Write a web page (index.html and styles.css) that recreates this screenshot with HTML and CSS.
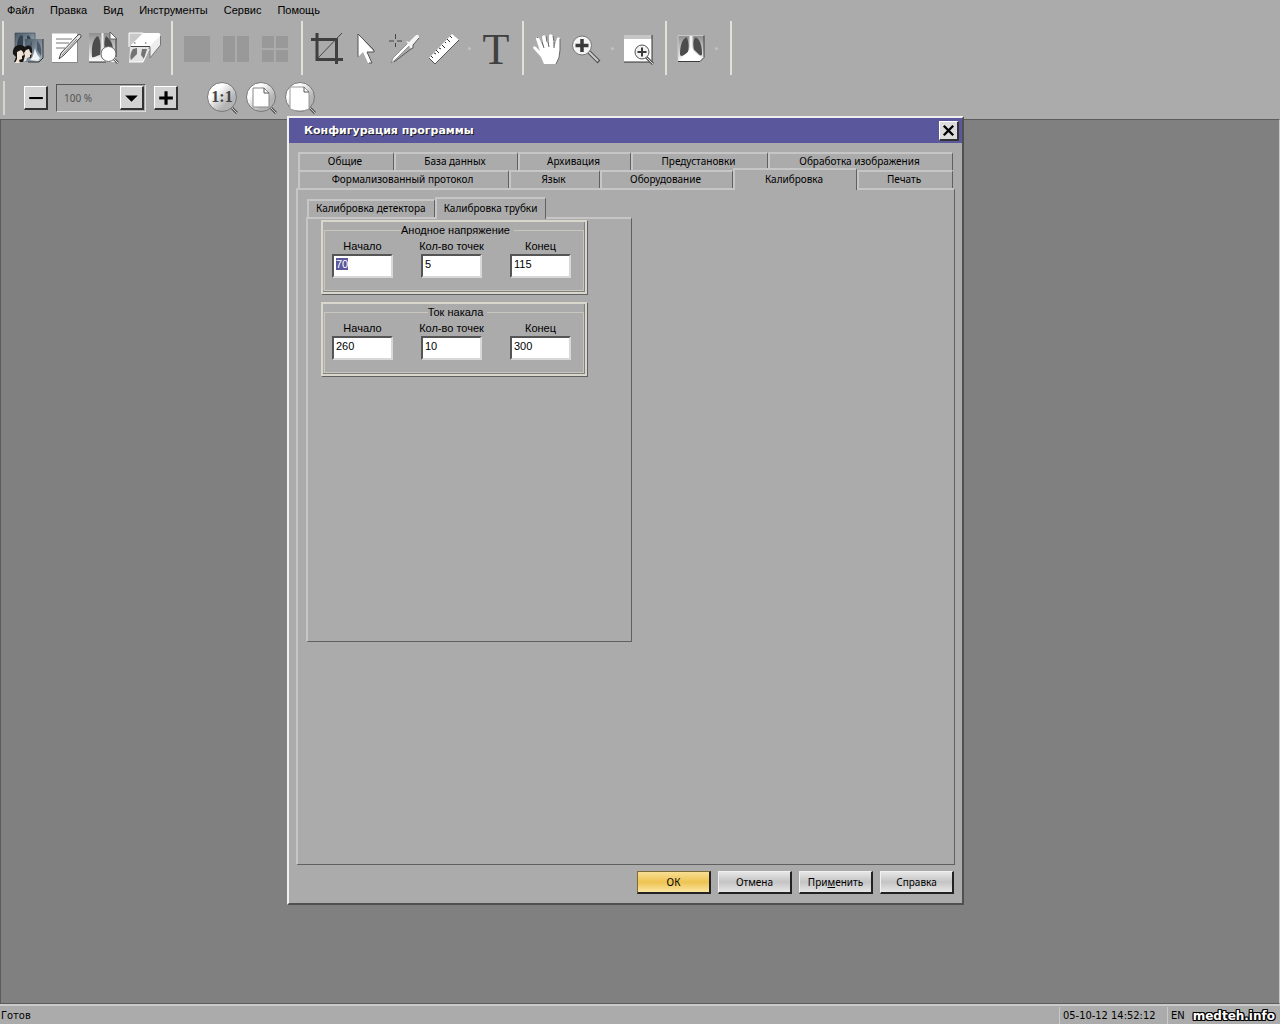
FILE: index.html
```html
<!DOCTYPE html>
<html lang="ru">
<head>
<meta charset="utf-8">
<title>Конфигурация программы</title>
<link rel="stylesheet" href="styles.css">
</head>
<body>
<svg class="defs" width="0" height="0" aria-hidden="true">
  <defs>
    <linearGradient id="film" x1="0" y1="0" x2="0" y2="1"><stop offset="0" stop-color="#8f8f8f"/><stop offset=".5" stop-color="#c4c4c4"/><stop offset="1" stop-color="#fff"/></linearGradient>
    <linearGradient id="navy" x1="0" y1="0" x2="1" y2="1"><stop offset="0" stop-color="#4a5866"/><stop offset="1" stop-color="#a9b8c4"/></linearGradient>
    <linearGradient id="lens" x1="0" y1="0" x2="1" y2="1"><stop offset=".3" stop-color="#fff"/><stop offset=".7" stop-color="#b4b4b4"/></linearGradient>
    <symbol id="lungs" viewBox="0 0 28 28">
      <path d="M1 1H27V23L23 27H1Z" fill="url(#film)"/>
      <path d="M10 3C6 3 3 10 3 19C3 21 4 22 6 21L11 18C12 13 12 8 10 3Z" fill="#4c4c4c"/>
      <path d="M18 3C22 3 25 10 25 19C25 21 24 22 22 20L17 15C16 10 16 6 18 3Z" fill="#4c4c4c"/>
      <path d="M14 1V16" stroke="#f4f4f4" stroke-width="3"/>
      <path d="M3 26C6 20 11 20 13 13H15C17 19 22 20 24 23L23 26Z" fill="#fff"/>
      <path d="M1 27V1H27" fill="none" stroke="#c9c9c9"/>
      <path d="M1 27H23L27 23V1" fill="none" stroke="#3c3c3c"/>
    </symbol>
  </defs>
</svg>

<nav class="menubar">
  <button>Файл</button><button>Правка</button><button>Вид</button><button>Инструменты</button><button>Сервис</button><button>Помощь</button>
</nav>

<div class="toolbar">
  <div class="group">
    <button class="tool" aria-label="Пациенты"><svg viewBox="0 0 32 32">
      <path d="M3 1H23V18H3Z" fill="url(#navy)" stroke="#35414d" stroke-width=".6"/>
      <path d="M9 3C6 5 5 10 5 15H11V4ZM16 3C19 5 20 10 21 15H15V4Z" fill="#34424f"/>
      <path d="M13 7H31V26L27 30H13Z" fill="url(#navy)"/><path d="M31 7V26L27 30H16" fill="none" stroke="#333"/>
      <path d="M20 9C17 11 15 17 16 24L20 20ZM25 9C29 12 30 18 29 24L25 18Z" fill="#4b5a68"/><path d="M18 28C21 26 22 20 23 16C24 21 26 24 28 26L26 29Z" fill="#eef3f6"/>
      <path d="M1 22C0 13 8 11 13 15C18 11 21 16 20 21L19 26L13 24L11 30H2L4 25Z" fill="#161616"/>
      <path d="M5 20L9 18L11 20L12 23L10 24L10 27L7 28L8 31H3L5 27Z" fill="#f2e2d6"/>
      <path d="M14 18L17 17L18 20L20 22L18 23V25L15 26L14 29H12L13 24L12 21Z" fill="#f2e2d6"/>
    </svg></button>
    <button class="tool" aria-label="Протокол"><svg viewBox="0 0 32 32">
      <path d="M1 1.500H26V30H1Z" fill="#fff"/><path d="M26.500 8V30.500H1" fill="none" stroke="#888"/>
      <path d="M5 7H21M5 11H18M5 16H14" stroke="#777"/>
      <path d="M8 27L10 21L27 3Q30 1 30 5L13 23Z" fill="#e4e4e4" stroke="#444"/><path d="M11 23L26 7" stroke="#888"/>
    </svg></button>
    <button class="tool" aria-label="Просмотр снимка"><svg viewBox="0 0 32 32">
      <path d="M-1 1H20L26 7V30H-1Z" fill="url(#film)"/><path d="M26 7V25M-1 30H16" stroke="#333"/>
      <path d="M8 4C3 6 1 15 2 25C5 26 8 23 10 23C11 16 11 9 8 4Z" fill="#4c4c4c"/><path d="M16 4C20 7 23 11 23 19H15C14 13 14 8 16 4Z" fill="#4c4c4c"/>
      <path d="M12.500 1V22" stroke="#eee" stroke-width="2"/>
      <path d="M20 0V7H27Z" fill="#fff" stroke="#444" stroke-width=".8"/>
      <circle cx="18.500" cy="22" r="7.500" fill="#fff" stroke="#666"/><path d="M24 27L28 31" stroke="#555" stroke-width="2.500"/><path d="M24 27L28 31" stroke="#eee"/>
    </svg></button>
    <button class="tool" aria-label="Печать"><svg viewBox="0 0 32 32">
      <path d="M0 1H15L3 14H0Z" fill="#c8c8c8"/><path d="M0 15V1H14" fill="none" stroke="#fff"/>
      <path d="M2 13L14 1H30Q32 2 31 5V13L21 26V15H2Z" fill="#fff"/>
      <path d="M21 14L31 4V13L21 26Z" fill="#ededed"/><path d="M31.500 4V13L21 26V15" fill="none" stroke="#777"/>
      <path d="M1 15H20L14 30H0Z" fill="#e4e4e4"/><path d="M4 17C1 21 1 26 2 28L8 22V16ZM13 17L12 23L15 27L18 17Z" fill="#737373"/>
      <path d="M2 14.500H21" stroke="#444"/><path d="M5 11H6.500M16 11H17.500" stroke="#555"/><path d="M0 30H14L20 17" fill="none" stroke="#fff"/>
    </svg></button>
  </div>
  <div class="group">
    <button class="tool" aria-label="Одно окно" disabled><svg viewBox="0 0 32 32"><path d="M3 4H29V30H3Z" fill="#999"/></svg></button>
    <button class="tool" aria-label="Два окна" disabled><svg viewBox="0 0 32 32"><path d="M3 4H15V30H3ZM17 4H29V30H17Z" fill="#999"/></svg></button>
    <button class="tool" aria-label="Четыре окна" disabled><svg viewBox="0 0 32 32"><path d="M3 4H15V16H3ZM17 4H29V16H17ZM3 18H15V30H3ZM17 18H29V30H17Z" fill="#999"/></svg></button>
  </div>
  <div class="group">
    <button class="tool" aria-label="Обрезка"><svg viewBox="0 0 32 32"><path d="M6 1V27.500H32M0 7.500H25.500V32" fill="none" stroke="#3f3f3f" stroke-width="3"/><path d="M7 26L31 1" stroke="#444"/></svg></button>
    <button class="tool" aria-label="Указатель"><svg viewBox="0 0 32 32"><path d="M8 2V25L13 20L18 31H22L17 20H24Z" fill="#fff"/><path d="M8 2L24 18V20H17L22 31H19M8 2V25" fill="none" stroke="#555"/></svg></button>
    <button class="tool" aria-label="Пипетка"><svg viewBox="0 0 32 32"><path d="M0 9H5M8 9H13M6.500 2V7M6.500 11V15" stroke="#444"/><path d="M2 31L4 26L19 11L21 13L6 28Z" fill="#fff" stroke="#777" stroke-width=".7"/><path d="M17 9L20 10L26 4Q30 1 30 5Q30 7 24 13L24 16L22 17Z" fill="#f4f4f4"/><path d="M30 6L24 13V16L22 17L5 30" fill="none" stroke="#555"/></svg></button>
    <button class="tool" aria-label="Линейка"><svg viewBox="0 0 32 32"><path d="M1 26L24 2L31 8L7 32Z" fill="#fff"/><path d="M31 8L7 32L1 26" fill="none" stroke="#555"/><path d="M3 24L5 26M6 21L8 22M8 18L11 21M11 16L13 17M14 13L17 16M17 10L18 11M19 7L22 10M22 4L24 6" stroke="#333"/></svg></button>
    <span class="more"></span>
    <button class="tool" aria-label="Текст"><svg viewBox="0 0 32 32"><text x="16" y="32" class="glyph-t">T</text></svg></button>
  </div>
  <div class="group">
    <button class="tool" aria-label="Рука"><svg viewBox="0 0 32 32"><path d="M12 32L9 25L1 16Q1 13 4 15L8 19L4 7Q4 4 7 6L12 16L10 5Q11 2 14 4L17 15L17 3Q19 1 21 4L22 16L25 6Q28 4 28 8L28 18Q28 26 24 32Z" fill="#fff"/><path d="M10 10L12 16M16 10L17 15M22 10V16M28 7V18Q28 26 24 32M14 4L15 10M21 4L22 9M5 5L6 6" fill="none" stroke="#666"/></svg></button>
    <button class="tool" aria-label="Увеличить"><svg viewBox="0 0 32 32"><path d="M18 20L28 30" stroke="#555" stroke-width="4"/><path d="M18 20L27 29" stroke="#ccc" stroke-width="2"/><circle cx="11" cy="13.500" r="9.500" fill="#f4f4f4" stroke="#777"/><path d="M11 7V20M4.500 13.500H17.500" stroke="#3a3a3a" stroke-width="3.500"/></svg></button>
    <span class="more"></span>
    <button class="tool" aria-label="Увеличить область"><svg viewBox="0 0 32 32"><path d="M1 3H29V30H1Z" fill="#fff"/><path d="M1 3H29V7H1Z" fill="#c6c6c6"/><path d="M29 3V30H1" fill="none" stroke="#333"/><path d="M23 25L30 32" stroke="#555" stroke-width="3"/><path d="M23 25L30 32" stroke="#ddd"/><circle cx="19" cy="20" r="7" fill="#f2f2f2" stroke="#555"/><path d="M19 15.500V24.500M14.500 20H23.500" stroke="#3a3a3a" stroke-width="2"/></svg></button>
  </div>
  <div class="group">
    <button class="tool" aria-label="Снимок"><svg viewBox="0 0 32 32"><use href="#lungs" x="2" y="2" width="28" height="29"/></svg></button>
    <span class="more"></span>
  </div>
  <div class="group"></div>
</div>

<div class="zoombar">
  <button class="square" aria-label="Уменьшить масштаб"><svg viewBox="0 0 20 20"><path d="M4 10.500H17" stroke="#000" stroke-width="2"/></svg></button>
  <div class="combo">
    <select aria-label="Масштаб"><option>100 %</option></select>
    <span class="arrow"><svg viewBox="0 0 20 20"><path d="M4 8H16L10 14Z"/></svg></span>
  </div>
  <button class="square" aria-label="Увеличить масштаб"><svg viewBox="0 0 20 20"><path d="M4 10.500H17M10.500 4V17" stroke="#000" stroke-width="3"/></svg></button>
  <div class="lenses">
    <button class="lens" aria-label="Масштаб 1:1"><svg viewBox="0 0 32 32"><path d="M26 26L31 31" stroke="#555" stroke-width="3"/><path d="M26 26L31 31" stroke="#ccc"/><circle cx="16" cy="15" r="14.500" fill="url(#lens)" stroke="#777"/><text x="16" y="20" class="glyph-one">1:1</text></svg></button>
    <button class="lens" aria-label="Страница целиком"><svg viewBox="0 0 32 32"><path d="M26 26L31 31" stroke="#555" stroke-width="3"/><path d="M26 26L31 31" stroke="#ccc"/><circle cx="16" cy="15" r="14.500" fill="url(#lens)" stroke="#777"/><path d="M8 6H19L24 11V25H8Z" fill="#fff" stroke="#888"/><path d="M19 6V11H24" fill="none" stroke="#555"/></svg></button>
    <button class="lens" aria-label="По ширине страницы"><svg viewBox="0 0 32 32"><path d="M26 26L31 31" stroke="#555" stroke-width="3"/><path d="M26 26L31 31" stroke="#ccc"/><circle cx="16" cy="15" r="14.500" fill="url(#lens)" stroke="#777"/><path d="M6 5H20L25 10V27Q16 31 6 27Z" fill="#fff" stroke="#999"/><path d="M20 5V10H25" fill="none" stroke="#555"/></svg></button>
  </div>
</div>

<main class="workspace"></main>

<footer class="statusbar">
  <span class="cell ready">Готов</span>
  <span class="cell clock">05-10-12 14:52:12</span>
  <span class="cell lang">EN<b class="watermark">medteh.info</b></span>
</footer>

<section class="dialog" role="dialog" aria-labelledby="dialog-title">
  <header class="titlebar">
    <h1 id="dialog-title">Конфигурация программы</h1>
    <button class="close" aria-label="Закрыть"><svg viewBox="0 0 18 18"><path d="M4 4L14 14M14 4L4 14" stroke="#000" stroke-width="2.500"/></svg></button>
  </header>
  <div class="dialog-body">
    <div class="tabs" role="tablist">
      <div class="tab-row first">
        <button class="tab" role="tab">Общие</button><button class="tab" role="tab">База данных</button><button class="tab" role="tab">Архивация</button><button class="tab" role="tab">Предустановки</button><button class="tab" role="tab">Обработка изображения</button>
      </div>
      <div class="tab-row second">
        <button class="tab" role="tab">Формализованный протокол</button><button class="tab" role="tab">Язык</button><button class="tab" role="tab">Оборудование</button><button class="tab active" role="tab" aria-selected="true">Калибровка</button><button class="tab" role="tab">Печать</button>
      </div>
    </div>
    <div class="page">
      <div class="inner-tabs" role="tablist">
        <button class="tab" role="tab">Калибровка детектора</button><button class="tab active" role="tab" aria-selected="true">Калибровка трубки</button>
      </div>
      <div class="inner-page">
        <div class="frame"><fieldset>
          <legend>Анодное напряжение</legend>
          <div class="fields">
            <label>Начало<input type="text" id="voltage-start" value="70"></label>
            <label>Кол-во точек<input type="text" value="5"></label>
            <label>Конец<input type="text" value="115"></label>
          </div>
        </fieldset></div>
        <div class="frame"><fieldset>
          <legend>Ток накала</legend>
          <div class="fields">
            <label>Начало<input type="text" value="260"></label>
            <label>Кол-во точек<input type="text" value="10"></label>
            <label>Конец<input type="text" value="300"></label>
          </div>
        </fieldset></div>
      </div>
    </div>
    <div class="actions">
      <button class="action primary">ОК</button>
      <button class="action">Отмена</button>
      <button class="action">При<u>м</u>енить</button>
      <button class="action">Справка</button>
    </div>
  </div>
</section>
<script src="script.js"></script>
</body>
</html>
```

FILE: styles.css
```css
* { box-sizing: border-box; }

body {
  margin: 0;
  min-height: 100vh;
  display: flex;
  flex-direction: column;
  position: relative;
  background: #ababab;
  color: #000;
  font: 11px/14px "Liberation Sans", sans-serif;
}

button, input, select { font: inherit; color: inherit; margin: 0; border-radius: 0; }
button { padding: 0; border: 0; background: none; }
svg { display: block; }
.defs { position: absolute; }

/* Menu */
.menubar { display: flex; gap: 16px; height: 20px; padding: 0 7px; }

/* Main toolbar */
.toolbar { display: flex; padding: 1px 2px; height: 59px; }
.group {
  display: flex;
  align-items: center;
  height: 54px;
  padding: 0 7px 0 4px;
  border-left: 2px solid #e3e0d6;
}
.tool { width: 39px; display: flex; justify-content: center; }
.tool svg { width: 32px; height: 32px; overflow: visible; }
.more { width: 13px; display: flex; justify-content: center; }
.more::before { content: ""; width: 3px; height: 3px; border-radius: 2px; background: #c2c2c2; }
.glyph-t { font: 44px "Liberation Serif", serif; text-anchor: middle; fill: #404040; }
.glyph-one { font: bold 16px "Liberation Serif", serif; text-anchor: middle; fill: #444; }

/* Zoom toolbar */
.zoombar {
  display: flex;
  align-items: center;
  gap: 8px;
  height: 34px;
  margin: 2px 0 4px 3px;
  padding-left: 19px;
  border-left: 2px solid #d6d4cc;
}
.square, .arrow {
  width: 24px;
  height: 24px;
  background: #d2d2d2;
  border: 1px solid #fff;
  border-right: 2px solid #333;
  border-bottom: 2px solid #333;
}
.combo {
  position: relative;
  width: 90px;
  height: 28px;
  border: 1px solid #dcdcdc;
  border-top: 1px solid #555;
  border-left: 1px solid #555;
}
.combo select {
  appearance: none;
  width: 100%;
  height: 100%;
  padding: 0 7px;
  border: 0;
  background: #ababab;
  color: #555;
  font: 10px "Noto Sans", sans-serif;
}
.arrow { position: absolute; top: 1px; right: 1px; pointer-events: none; }
.lenses { display: flex; gap: 7px; padding-left: 20px; }
.lens svg { width: 32px; height: 32px; }

/* Desktop area and status bar */
.workspace {
  flex: 1;
  background: #808080;
  border: 1px solid #5c5c5c;
  border-right-color: #c8c8c8;
}
.statusbar { display: flex; border-top: 2px solid #cacaca; height: 20px; font: 11px/14px "DejaVu Sans Condensed", "DejaVu Sans", sans-serif; font-stretch: condensed; }
.cell { margin-top: 1px; padding: 2px 0 0 3px; border-left: 1px solid #c8c8c8; }
.ready { flex: 1; border-left: 0; padding-left: 1px; }
.clock { width: 108px; }
.lang { width: 113px; display: flex; gap: 8px; }
.watermark {
  font: bold 12px/14px "DejaVu Sans", sans-serif;
  color: #fff;
  text-shadow: -1px -1px 0 #000, 0 -1px 0 #000, 1px -1px 0 #000, -1px 0 0 #000, 1px 0 0 #000, -1px 1px 0 #000, 0 1px 0 #000, 1px 1px 0 #000;
}

/* Dialog window */
.dialog {
  position: absolute;
  left: 287px;
  top: 116px;
  width: 677px;
  background: #ababab;
  border: 2px solid #505050;
  border-top-color: #f0f0f0;
  border-left-color: #f0f0f0;
}
.titlebar {
  display: flex;
  align-items: center;
  justify-content: space-between;
  height: 25px;
  padding: 0 3px 0 15px;
  background: #5b579c;
}
.titlebar h1 {
  margin: 0;
  color: #fff;
  font: bold 11px/14px "DejaVu Sans", sans-serif;
  text-shadow: 1px 1px 0 #222;
}
.close {
  width: 20px;
  height: 20px;
  background: #dcdcdc;
  border: 1px solid #fff;
  border-right: 2px solid #333;
  border-bottom: 2px solid #333;
}
.dialog-body { padding: 9px 7px 9px; }

/* Tabs */
.tab {
  height: 18px;
  padding: 0 3px 2px 0;
  border-top: 2px solid #c6c6c6;
  border-left: 2px solid #c6c6c6;
  border-right: 1px solid #606060;
  font: 10px/14px "Noto Sans", sans-serif;
  white-space: nowrap;
}
.tabs { padding: 0 2px; }
.tab-row { display: grid; grid-template-rows: 18px; align-items: end; }
.first { grid-template-columns: 96fr 124fr 113fr 137fr 185fr; }
.second { grid-template-columns: 211fr 91fr 133fr 124fr 96fr; }
.tab.active { position: relative; z-index: 1; height: 22px; margin-bottom: -2px; background: #ababab; }
.page {
  min-height: 677px;
  padding: 8px;
  border: 2px solid #c6c6c6;
  border-right: 1px solid #606060;
  border-bottom: 1px solid #606060;
}
.inner-tabs { display: flex; align-items: end; height: 19px; padding-left: 1px; }
.inner-tabs .tab { padding: 0 8px 2px 7px; }
.inner-page {
  width: 326px;
  min-height: 425px;
  padding: 1px 13px;
  border: 2px solid #c6c6c6;
  border-right: 1px solid #606060;
  border-bottom: 1px solid #606060;
  display: flex;
  flex-direction: column;
  align-items: flex-start;
  gap: 8px;
}

/* Calibration groups */
.frame {
  width: 266px;
  padding: 1px;
  border: 2px solid #d9d6cc;
  box-shadow: inset -1px -1px 0 #808080, 1px 1px 0 #606060;
}
fieldset { margin: 0; padding: 0 0 12px 7px; border: 1px solid #c9c6be; }
legend { margin: 0 auto; padding: 0 4px 0 0; }
.fields { display: flex; gap: 28px; padding-top: 2px; }
.fields label { display: flex; flex-direction: column; align-items: center; gap: 1px; width: 61px; white-space: nowrap; }
.fields input {
  width: 61px;
  height: 24px;
  padding: 0 2px 4px;
  background: #fff;
  border: 2px solid #555;
  border-right-color: #d8d8d8;
  border-bottom-color: #d8d8d8;
  outline: 0;
}
.fields input::selection { background: #5b579c; color: #fff; }

/* Dialog buttons */
.actions { display: flex; justify-content: flex-end; gap: 7px; padding: 6px 1px 0 0; }
.action {
  width: 74px;
  height: 23px;
  background: linear-gradient(#e6e6e6, #c4c4c4 50%, #e6e6e6);
  border: 1px solid #f0f0f0;
  border-right: 2px solid #222;
  border-bottom: 2px solid #222;
  font: 10px/14px "Noto Sans", sans-serif;
}
.primary { background: linear-gradient(#f8df94, #eec352 50%, #fbe6a0); border-top-color: #7d6a35; border-left-color: #7d6a35; }
```

FILE: script.js
```js
// The first field is ready for typing over when the dialog opens.
const first = document.getElementById('voltage-start');
first.focus();
first.select();
```
